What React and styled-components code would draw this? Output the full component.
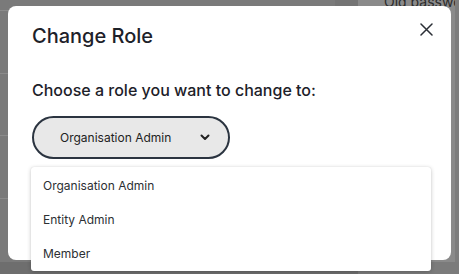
import React from "react";
import styled, { createGlobalStyle } from "styled-components";

const Global = createGlobalStyle`
  html, body { margin: 0; padding: 0; }
  body {
    width: 459px; height: 274px; overflow: hidden;
    background: #7a7a7a;
    font-family: Inter, "Noto Sans", sans-serif;
  }
  * { box-sizing: border-box; }
`;

const Page = styled.div`
  position: relative;
  width: 459px;
  height: 274px;
  display: grid;
  grid-template-columns: 335px 23px 1fr;
  grid-template-rows: 262px 12px;
  background: #7a7a7a;
`;

const LeftPane = styled.div`
  display: flex;
  flex-direction: column;
  padding-top: 10px;
  background: #7a7a7a;
`;

const BgRow = styled.div`
  height: 62.7px;
  border-top: 1px solid #8b8b8b;
`;

const MidPane = styled.div`
  background: #747474;
`;

const RightPane = styled.div`
  background: #8a8a8a;
  padding-left: 26px;
  border-right: 4px solid #7d7d7d;
  overflow: hidden;
`;

const BgText = styled.div`
  font-size: 14px;
  line-height: 14px;
  margin-top: -5px;
  color: #2a2a2a;
  white-space: nowrap;
`;

const BottomLeft = styled.div`
  grid-column: 1 / 3;
  background: #6e6e6e;
`;

const BottomRight = styled.div`
  background: #7b7b7b;
`;

const Overlay = styled.div`
  position: absolute;
  inset: 0;
  padding: 6px 8px 0 8px;
`;

const Modal = styled.div`
  position: relative;
  width: 443px;
  height: 254px;
  background: #fff;
  border-radius: 8px;
  padding: 16px 24px 0 24px;
  display: flex;
  flex-direction: column;
  align-items: flex-start;
`;

const Title = styled.h2`
  margin: 0;
  font-size: 20px;
  line-height: 28px;
  font-weight: 500;
  color: #1d2129;
`;

const CloseButton = styled.button`
  position: absolute;
  top: 11px;
  right: 13px;
  width: 24px;
  height: 24px;
  border: none;
  background: none;
  padding: 0;
  display: flex;
  align-items: center;
  justify-content: center;
  color: #2b2f36;
`;

const Prompt = styled.p`
  margin: 28px 0 0 0;
  font-size: 16px;
  line-height: 24px;
  font-weight: 500;
  color: #1d2129;
`;

const Select = styled.button`
  margin-top: 14px;
  width: 198px;
  height: 43px;
  border: 2px solid #2b3440;
  border-radius: 22px;
  background: #e8e8e8;
  display: flex;
  align-items: center;
  padding: 0 18px 0 26px;
  font-family: inherit;
  font-size: 12px;
  color: #222;
  cursor: pointer;
`;

const SelectLabel = styled.span`
  flex: 1;
  text-align: left;
`;

const Menu = styled.ul`
  position: absolute;
  left: 23px;
  top: 161px;
  width: 400px;
  margin: 0;
  padding: 1px 0;
  list-style: none;
  background: #fff;
  border-radius: 3px;
  box-shadow: 0 1px 4px rgba(0, 0, 0, 0.22), 0 0 1px rgba(0, 0, 0, 0.15);
`;

const MenuItem = styled.li`
  height: 34px;
  display: flex;
  align-items: center;
  padding-left: 12px;
  font-size: 12px;
  color: #2c2f33;
`;

export default function App() {
  const roles = ["Organisation Admin", "Entity Admin", "Member"];
  return (
    <>
      <Global />
      <Page>
        <LeftPane>
          <BgRow />
          <BgRow />
          <BgRow />
          <BgRow />
        </LeftPane>
        <MidPane />
        <RightPane>
          <BgText>Old password</BgText>
        </RightPane>
        <BottomLeft />
        <BottomRight />
        <Overlay>
          <Modal>
            <Title>Change Role</Title>
            <CloseButton aria-label="Close">
              <svg width="13" height="13" viewBox="0 0 13 13" fill="none">
                <path d="M1 1L12 12M12 1L1 12" stroke="currentColor" strokeWidth="1.5" strokeLinecap="round" />
              </svg>
            </CloseButton>
            <Prompt>Choose a role you want to change to:</Prompt>
            <Select>
              <SelectLabel>Organisation Admin</SelectLabel>
              <svg width="10" height="7" viewBox="0 0 10 7" fill="none">
                <path d="M1.5 1.5L5 5L8.5 1.5" stroke="#222" strokeWidth="2" strokeLinecap="round" strokeLinejoin="round" />
              </svg>
            </Select>
            <Menu>
              {roles.map((r) => (
                <MenuItem key={r}>{r}</MenuItem>
              ))}
            </Menu>
          </Modal>
        </Overlay>
      </Page>
    </>
  );
}
